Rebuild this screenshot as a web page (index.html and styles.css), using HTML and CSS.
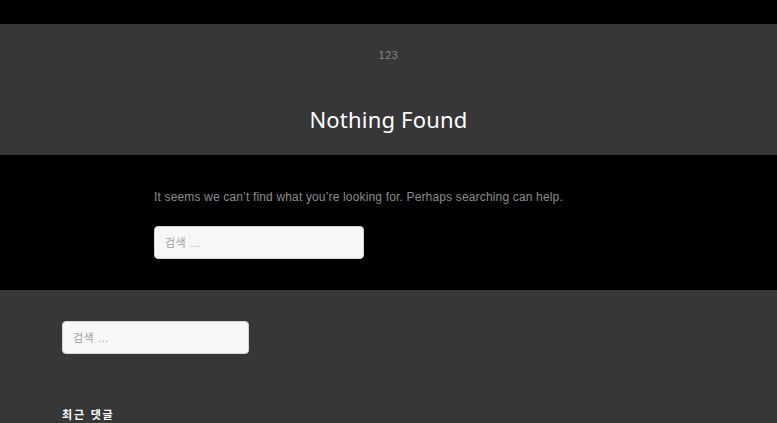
FILE: index.html
```html
<!DOCTYPE html>
<html lang="ko">
<head>
<meta charset="utf-8">
<title>Nothing Found</title>
<link rel="stylesheet" href="styles.css">
</head>
<body>
<div class="topbar"></div>
<header class="page-header">
  <p class="site-title">123</p>
  <h1 class="page-title">Nothing Found</h1>
</header>
<main class="content">
  <div class="content-inner">
    <p class="message">It seems we can’t find what you’re looking for. Perhaps searching can help.</p>
    <form class="search-form"><input class="search-field" type="search" placeholder="검색 …"></form>
  </div>
</main>
<footer class="footer">
  <form class="search-form footer-search"><input class="search-field small" type="search" placeholder="검색 …"></form>
  <h2 class="widget-title">최근 댓글</h2>
</footer>
</body>
</html>
```
FILE: styles.css
```css
html, body {
  margin: 0;
  padding: 0;
  background: #000;
  height: 423px;
  overflow: hidden;
}
body {
  font-family: "Liberation Sans", "Noto Sans CJK KR", sans-serif;
}
.topbar {
  height: 24px;
  background: #000;
}
.page-header {
  background: #373737;
  height: 131px;
  display: flex;
  flex-direction: column;
  align-items: center;
}
.site-title {
  margin: 23px 0 0;
  font-size: 11px;
  line-height: 16px;
  letter-spacing: 0.5px;
  color: #858585;
}
.page-title {
  margin: 41px 0 0;
  font-family: "Noto Sans", sans-serif;
  font-weight: 400;
  font-size: 22px;
  line-height: 30px;
  letter-spacing: 0.2px;
  color: #fff;
}
.content {
  background: #000;
  height: 135px;
}
.content-inner {
  padding: 34px 0 0 154px;
}
.message {
  margin: 0;
  font-size: 12px;
  line-height: 16px;
  letter-spacing: 0.16px;
  color: #8c8c8c;
}
.search-form {
  margin: 21px 0 0;
}
.search-field {
  box-sizing: border-box;
  width: 210px;
  height: 33px;
  border: 1px solid #d4d4d4;
  border-radius: 4px;
  background: #f7f7f7;
  padding: 0 10px;
  font-family: "Liberation Sans", "Noto Sans CJK KR", sans-serif;
  font-size: 11px;
  letter-spacing: 0.5px;
  color: #555;
  outline: none;
}
.search-field::placeholder {
  color: #a0a0a0;
}
.footer {
  background: #373737;
  height: 133px;
  padding: 31px 0 0 62px;
  box-sizing: border-box;
}
.footer-search {
  margin: 0;
}
.search-field.small {
  width: 187px;
}
.widget-title {
  margin: 53px 0 0;
  font-size: 11px;
  line-height: 16px;
  font-weight: 700;
  letter-spacing: 1.8px;
  color: #fff;
}
```
